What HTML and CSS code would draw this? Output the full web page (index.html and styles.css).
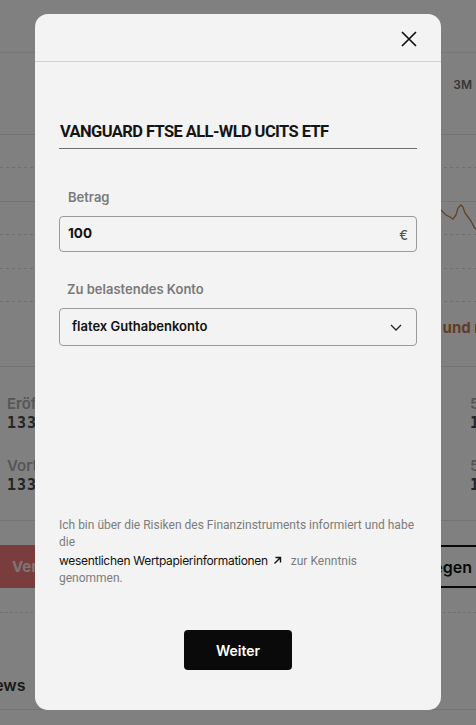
FILE: index.html
```html
<!DOCTYPE html>
<html lang="de">
<head>
<meta charset="utf-8">
<title>Sparplan</title>
<link rel="stylesheet" href="styles.css">
</head>
<body>
<div class="page">
  <div class="topbar"></div>
  <div class="tabs">
    <span class="tab">1T</span><span class="tab">1W</span><span class="tab">1M</span><span class="tab">3M</span>
  </div>
  <div class="chart">
    <svg class="chart-svg" width="476" height="183" viewBox="0 0 476 183">
      <g stroke="#d8d8d8" stroke-dasharray="3 3" stroke-width="1">
        <line x1="0" y1="32.5" x2="476" y2="32.5"/>
        <line x1="0" y1="99.5" x2="476" y2="99.5"/>
        <line x1="0" y1="133.5" x2="476" y2="133.5"/>
        <line x1="0" y1="166.5" x2="476" y2="166.5"/>
      </g>
      <line x1="0" y1="66.5" x2="476" y2="66.5" stroke="#e6e6e6"/>
      <polyline fill="none" stroke="#c27a52" stroke-width="1.3" points="430,70 440,74 446,80 450,82 453,84 456,80 458,73 461,70 463,72 465,78 468,82 471,86 474,92 476,94"/>
    </svg>
    <div class="chart-link">Kurse und mehr</div>
  </div>
  <div class="stats">
    <div class="stat"><div class="stat-label">Eröffnung</div><div class="stat-value">133,52</div></div>
    <div class="stat"><div class="stat-label">52W Hoch</div><div class="stat-value">145,10</div></div>
    <div class="stat"><div class="stat-label">Vortag</div><div class="stat-value">133,10</div></div>
    <div class="stat"><div class="stat-label">52W Tief</div><div class="stat-value">110,26</div></div>
  </div>
  <div class="actions">
    <button class="btn-sell">Verkaufen</button>
    <button class="btn-plan">Sparplan anlegen</button>
  </div>
  <div class="news">
    <h2 class="news-title">News</h2>
  </div>
</div>

<div class="overlay"></div>

<div class="modal" role="dialog">
  <div class="modal-header">
    <button class="close" aria-label="Schließen">
      <svg width="16" height="16" viewBox="0 0 16 16"><path d="M1 1L15 15M15 1L1 15" stroke="#111" stroke-width="1.7" fill="none"/></svg>
    </button>
  </div>
  <div class="modal-body">
    <h1 class="instrument">VANGUARD FTSE ALL-WLD UCITS ETF</h1>

    <label class="field-label">Betrag</label>
    <div class="input">
      <span class="input-value">100</span>
      <span class="currency">€</span>
    </div>

    <label class="field-label label-account">Zu belastendes Konto</label>
    <div class="select">
      <span class="select-value">flatex Guthabenkonto</span>
      <svg class="chevron" width="12" height="7" viewBox="0 0 12 7"><path d="M1 1L6 6L11 1" stroke="#222" stroke-width="1.3" fill="none"/></svg>
    </div>

    <div class="spacer"></div>

    <div class="disclaimer">
      <p class="disc-line">Ich bin über die Risiken des Finanzinstruments informiert und habe die</p>
      <p class="disc-line disc-link-line"><a class="doc-link">wesentlichen Wertpapierinformationen<svg class="ext" width="9" height="9" viewBox="0 0 9 9"><path d="M1.5 7.5L7.5 1.5M2.5 1.5H7.5V6.5" stroke="#111" stroke-width="1.4" fill="none"/></svg></a> zur Kenntnis genommen.</p>
    </div>

    <div class="actions-modal">
      <button class="btn-next">Weiter</button>
    </div>
  </div>
</div>
</body>
</html>
```

FILE: styles.css
```css
* { box-sizing: border-box; }
html, body { margin: 0; padding: 0; }
body {
  width: 476px;
  height: 725px;
  overflow: hidden;
  position: relative;
  background: #fcfcfc;
  font-family: Inter, "Noto Sans", sans-serif;
  color: #222;
}

/* background page */
.page { width: 476px; }
.topbar { height: 53px; border-bottom: 1px solid #e8e8e8; background: #fcfcfc; }
.tabs {
  height: 82px;
  border-bottom: 1px solid #e4e4e4;
  display: flex;
  justify-content: flex-end;
  align-items: flex-start;
  padding: 24px 4px 0 0;
  gap: 20px;
}
.tab { font-size: 12px; font-weight: 600; color: #6a6a6a; line-height: 16px; }
.chart { height: 232px; border-bottom: 1px solid #e4e4e4; }
.chart-svg { display: block; }
.chart-link {
  padding-left: 396px;
  white-space: nowrap;
  font-size: 15px;
  font-weight: 700;
  color: #c0774a;
  line-height: 20px;
}
.stats {
  height: 154px;
  display: grid;
  grid-template-columns: 463px 120px;
  align-content: start;
  padding: 28px 0 0 7px;
  row-gap: 24px;
  border-bottom: 1px solid #e4e4e4;
}
.stat-label { font-size: 15px; font-weight: 600; color: #a9a9a9; line-height: 18px; white-space: nowrap; }
.stat-value { font-family: "DejaVu Sans Mono", monospace; font-size: 15px; font-weight: 700; color: #4a4a4a; line-height: 20px; letter-spacing: 1px; }
.actions {
  display: flex;
  justify-content: space-between;
  padding-top: 24px;
}
.btn-sell {
  width: 180px;
  height: 43px;
  margin-left: -145px;
  border: 0;
  background: #ee7878;
  color: #f7e6e6;
  font: 700 15px Inter, sans-serif;
  padding-left: 157px;
  text-align: left;
  white-space: nowrap;
  overflow: hidden;
}
.btn-plan {
  width: 200px;
  height: 43px;
  border: 0;
  border-top: 2px solid #111;
  border-bottom: 2px solid #111;
  background: transparent;
  font: 600 16px Inter, sans-serif;
  color: #111;
  padding-right: 4px;
  text-align: right;
  white-space: nowrap;
}
.news { border-top: 1px dashed #dcdcdc; margin-top: 24px; height: 98px; border-bottom: 1px solid #e4e4e4; padding-top: 62px; }
.news-title { margin: 0 0 0 -18px; font-size: 16px; font-weight: 600; color: #333; line-height: 20px; }

/* overlay + modal */
.overlay { position: absolute; inset: 0; background: rgba(0, 0, 0, 0.49); }
.modal {
  position: absolute;
  left: 35px;
  top: 14px;
  width: 406px;
  height: 696px;
  background: #f3f3f3;
  border-radius: 13px;
  display: flex;
  flex-direction: column;
}
.modal-header {
  height: 48px;
  border-bottom: 1px solid #d2d2d2;
  display: flex;
  justify-content: flex-end;
  align-items: flex-start;
  padding: 17px 24px 0 0;
}
.close { background: none; border: 0; padding: 0; width: 16px; height: 16px; display: block; }
.close svg { display: block; }
.modal-body {
  flex: 1;
  display: flex;
  flex-direction: column;
  padding: 60px 24px 40px;
}
.instrument {
  margin: 0;
  font-family: Roboto, Inter, sans-serif;
  font-size: 16.5px;
  letter-spacing: -0.6px;
  font-weight: 700;
  line-height: 20px;
  color: #151515;
  padding-left: 1px;
  padding-bottom: 6px;
  border-bottom: 1px solid #707070;
}
.field-label {
  display: block;
  margin-top: 39px;
  padding-left: 9px;
  font-size: 13px;
  font-weight: 600;
  color: #7a7a7a;
  line-height: 18px;
}
.label-account { margin-top: 28px; padding-left: 8px; }
.input {
  margin-top: 10px;
  height: 36px;
  border: 1px solid #9a9a9a;
  border-radius: 4px;
  display: flex;
  align-items: center;
  justify-content: space-between;
  padding: 0 8px 0 8px;
}
.input-value { font-size: 13.5px; font-weight: 700; color: #111; margin-top: -2px; }
.currency { font-size: 13px; color: #555; font-weight: 500; margin-top: 2px; }
.select {
  margin-top: 10px;
  height: 38px;
  border: 1px solid #9a9a9a;
  border-radius: 4px;
  display: flex;
  align-items: center;
  justify-content: space-between;
  padding: 0 14px 0 12px;
}
.select-value { font-size: 13px; font-weight: 600; color: #111; margin-top: -2px; }
.chevron { display: block; }
.spacer { flex: 1; }
.disclaimer { font-family: Roboto, sans-serif; font-size: 12px; color: #7c7c7c; }
.disc-line { margin: 0; line-height: 17px; }
.disc-link-line { margin-top: 1px; }
.doc-link { color: #111; font-family: Inter, sans-serif; letter-spacing: -0.3px; margin-right: 6px; }
.ext { margin-left: 5px; vertical-align: 0; }
.actions-modal { display: flex; justify-content: center; margin-top: 43px; }
.btn-next {
  width: 108px;
  height: 40px;
  background: #0a0a0a;
  color: #fff;
  border: 0;
  border-radius: 4px;
  font: 600 14px Inter, sans-serif;
}
```
